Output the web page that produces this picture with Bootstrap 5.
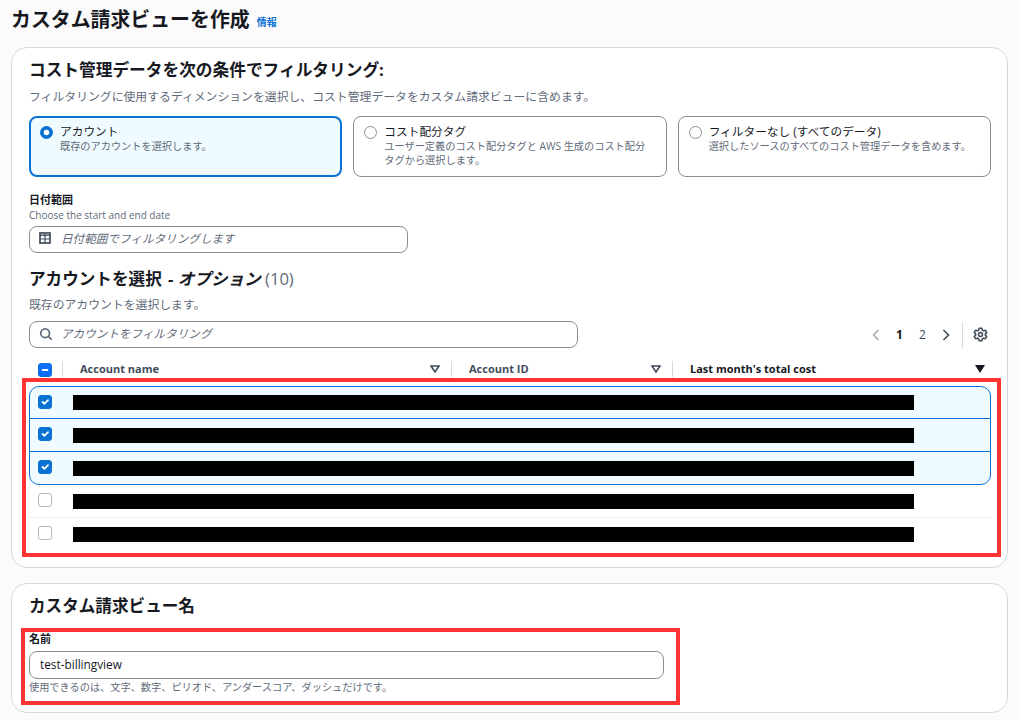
<!doctype html>
<html lang="ja">
<head>
<meta charset="utf-8">
<title>カスタム請求ビューを作成</title>
<link href="https://cdn.jsdelivr.net/npm/bootstrap@5.3.0/dist/css/bootstrap.min.css" rel="stylesheet">
<style>
html,body{height:720px;overflow:hidden}
body{background:#fbfbfb;color:#16191f;font-family:"Open Sans","Noto Sans CJK JP",sans-serif;font-size:12px}
.page-wrap{padding:0 12px 0 11px}
.title-bar{height:47px;padding:0 0 7px;gap:7px}
.page-title{font-size:19.9px;line-height:40px;font-weight:700;margin:0;color:#16191f}
.info-link{font-size:10px;font-weight:700;color:#0972d3;text-decoration:none;margin-top:4px}
.panel{border:1px solid #d5d8dd;border-radius:16px;background:#fff;padding:11px 16px 17px 17px}
.panel-next{margin-top:15px;padding-top:11px;padding-bottom:18px}
.panel-title{font-size:16.7px;line-height:22px;font-weight:700;margin:0}
.section-title{font-size:16.6px;line-height:22px;font-weight:700;margin:15px 0 0}
.section-title em{margin-left:2px}
.count{font-weight:400;color:#5f6b7a}
.muted-line{font-size:11.85px;line-height:16px;color:#5f6b7a}
.line-a{margin-top:7px}
.line-b{margin-top:6px}
.tiles{display:grid;grid-template-columns:repeat(3,1fr);gap:11px;margin-top:12px}
.tile{height:61px;border:1px solid #8c8c94;border-radius:8px;padding:7px 10px 0 10px;gap:7px;background:#fff}
.tile-on{border:2px solid #0972d3;background:#f0fbff;padding:6px 9px 0 9px}
.tile-mid{padding-right:20px}
.tile-name{font-size:11.7px;line-height:15px}
.tile-desc{font-size:10.2px;line-height:14px;color:#5f6b7a}
.form-check-input{margin:0;flex:none;width:13px;height:13px;border:1px solid #8c8c94}
.form-check-input[type=radio]{margin-top:2px}
.form-check-input:checked,.form-check-input:indeterminate{background-color:#0972d3;border-color:#0972d3}
.form-check-input[type=checkbox]{width:14px;height:14px;border-radius:3px;border-color:#b4b8bd}
.form-check-input[type=checkbox]:checked,.form-check-input[type=checkbox]:indeterminate{border-color:#0972d3}
.field-label{font-size:11px;line-height:14px;font-weight:700}
.field-hint{font-size:10px;line-height:14px;color:#5f6b7a;margin-top:1px}
.date-label{margin-top:16px}
.date-field{width:379px;margin-top:4px}
.text-box{height:27px;min-height:0;border:1px solid #8c8c94;border-radius:8px;font-size:11.6px;padding:0 11px 2px;background:#fff;color:#16191f;box-shadow:none}
.text-box::placeholder{color:#5f6b7a;font-style:italic}
.has-icon{padding-left:31px}
.box-icon{position:absolute;left:10px;top:6px;width:14px;height:14px;color:#5f6b7a}
.tools{margin-top:9px}
.search-field{width:549px}
.pager{color:#414d5c;font-size:12px;margin-left:auto;height:26px;padding-right:2px}
.pager svg{width:12px;height:12px}
.pg-num{width:23px;text-align:center}
.pg-on{font-weight:700;color:#16191f}
.pg-prev{color:#a6abb1;margin-right:6px}
.pg-next{margin-left:6px;color:#414d5c}
.pg-sep{width:1px;height:26px;background:#d5d8dd;margin:0 10px}
.pg-gear{width:15px!important;height:15px!important;margin-right:1px}
.head-grid{display:grid;grid-template-columns:33px 389px 221px 1fr;height:16px;margin-top:13px;align-items:center}
.head-check{padding-left:9px;height:14px;margin-top:1px}
.head-cell{border-left:1px solid #d5d8dd;height:16px;padding:0 11px 0 17px;font-size:11px;line-height:16px;font-weight:700;color:#414d5c}
.head-cell svg{width:10px;height:8px;color:#414d5c}
.head-last{color:#16191f;padding-right:6px}
.head-last svg{color:#16191f}
.rows-wrap{margin-top:9px}
.rows-wrap .form-check-input{margin-bottom:2px}
.acct-row{height:32px;padding-left:9px;gap:21px}
.acct-on{height:33px;background:#f0fbff;border:1.5px solid #0972d3;border-left-width:1px;border-right-width:1px;padding-left:8px}
.acct-on+.acct-on{margin-top:-1px;height:34px}
.acct-top{border-radius:10px 10px 0 0}
.acct-end{border-radius:0 0 10px 10px}
.acct-line{height:33px;border-top:1px solid #eceef0}
.redact{width:841px;height:15px;background:#000}
.mark-box{position:absolute;border:4.5px solid #ff3333;pointer-events:none}
.mark-rows{left:-7.5px;right:-10px;top:-8px;bottom:-7px}
.name-wrap{width:635px;margin-top:15px}
.mark-name{left:-8px;right:-16px;top:-4px;bottom:-11px}
.name-box{height:28px;margin-top:5px;padding:0 10px 3px;font-size:11.8px}
.name-hint{margin-top:1px;font-size:10.2px}
</style>
</head>
<body>
<main class="page-wrap">
  <div class="title-bar d-flex align-items-center">
    <h1 class="page-title">カスタム請求ビューを作成</h1>
    <a class="info-link" href="#">情報</a>
  </div>

  <section class="panel">
    <h2 class="panel-title">コスト管理データを次の条件でフィルタリング:</h2>
    <div class="muted-line line-a">フィルタリングに使用するディメンションを選択し、コスト管理データをカスタム請求ビューに含めます。</div>

    <div class="tiles">
      <label class="tile tile-on d-flex align-items-start">
        <input class="form-check-input" type="radio" name="dim" checked>
        <span><span class="tile-name d-block">アカウント</span><span class="tile-desc d-block">既存のアカウントを選択します。</span></span>
      </label>
      <label class="tile tile-mid d-flex align-items-start">
        <input class="form-check-input" type="radio" name="dim">
        <span><span class="tile-name d-block">コスト配分タグ</span><span class="tile-desc d-block">ユーザー定義のコスト配分タグと AWS 生成のコスト配分タグから選択します。</span></span>
      </label>
      <label class="tile d-flex align-items-start">
        <input class="form-check-input" type="radio" name="dim">
        <span><span class="tile-name d-block">フィルターなし (すべてのデータ)</span><span class="tile-desc d-block">選択したソースのすべてのコスト管理データを含めます。</span></span>
      </label>
    </div>

    <div class="field-label date-label">日付範囲</div>
    <div class="field-hint">Choose the start and end date</div>
    <div class="date-field position-relative">
      <svg class="box-icon" viewBox="0 0 14 14" fill="none" stroke="#414d5c" stroke-width="1.7"><rect x="1" y="1" width="10" height="10"/><path d="M1 3.2h10" stroke-width="1.4"/><path d="M6 2v9M1 7h10" stroke-width="1.2"/></svg>
      <input class="form-control text-box has-icon" type="text" placeholder="日付範囲でフィルタリングします">
    </div>

    <h3 class="section-title">アカウントを選択 <em>- オプション</em> <span class="count">(10)</span></h3>
    <div class="muted-line line-b">既存のアカウントを選択します。</div>

    <div class="tools d-flex align-items-center">
      <div class="search-field position-relative">
        <svg class="box-icon" viewBox="0 0 16 16" fill="none" stroke="currentColor" stroke-width="2"><circle cx="7" cy="7" r="5"/><path d="m10.7 10.7 3.8 3.8"/></svg>
        <input class="form-control text-box has-icon" type="text" placeholder="アカウントをフィルタリング">
      </div>
      <nav class="pager d-flex align-items-center">
        <svg class="pg-prev" viewBox="0 0 12 12" fill="none" stroke="currentColor" stroke-width="1.6"><path d="M8.5 1 3.5 6l5 5"/></svg>
        <span class="pg-num pg-on">1</span>
        <span class="pg-num">2</span>
        <svg class="pg-next" viewBox="0 0 12 12" fill="none" stroke="currentColor" stroke-width="1.6"><path d="m3.5 1 5 5-5 5"/></svg>
        <span class="pg-sep"></span>
        <svg class="pg-gear" viewBox="0 0 16 16" fill="none" stroke="currentColor" stroke-width="1.7" stroke-linejoin="round"><path d="M6.6 1.3h2.8l.5 2 1.4.8 2-.6 1.4 2.4-1.5 1.4v1.4l1.5 1.4-1.4 2.4-2-.6-1.4.8-.5 2H6.6l-.5-2-1.4-.8-2 .6-1.4-2.4 1.5-1.4V7.3L1.3 5.9l1.4-2.4 2 .6 1.4-.8z"/><circle cx="8" cy="8" r="2.1"/></svg>
      </nav>
    </div>

    <div class="head-grid">
      <div class="head-check d-flex"><input id="allRows" class="form-check-input" type="checkbox" checked></div>
      <div class="head-cell d-flex justify-content-between align-items-center"><span>Account name</span><svg viewBox="0 0 10 8" fill="none" stroke="currentColor" stroke-width="1.6"><path d="M1 1h8L5 7z"/></svg></div>
      <div class="head-cell d-flex justify-content-between align-items-center"><span>Account ID</span><svg viewBox="0 0 10 8" fill="none" stroke="currentColor" stroke-width="1.6"><path d="M1 1h8L5 7z"/></svg></div>
      <div class="head-cell head-last d-flex justify-content-between align-items-center"><span>Last month's total cost</span><svg viewBox="0 0 10 8" fill="currentColor"><path d="M0 0h10L5 8z"/></svg></div>
    </div>

    <div class="rows-wrap position-relative">
      <div class="acct-row acct-on acct-top d-flex align-items-center"><input class="form-check-input" type="checkbox" checked><div class="redact"></div></div>
      <div class="acct-row acct-on d-flex align-items-center"><input class="form-check-input" type="checkbox" checked><div class="redact"></div></div>
      <div class="acct-row acct-on acct-end d-flex align-items-center"><input class="form-check-input" type="checkbox" checked><div class="redact"></div></div>
      <div class="acct-row d-flex align-items-center"><input class="form-check-input" type="checkbox"><div class="redact"></div></div>
      <div class="acct-row acct-line d-flex align-items-center"><input class="form-check-input" type="checkbox"><div class="redact"></div></div>
      <div class="mark-box mark-rows"></div>
    </div>
  </section>

  <section class="panel panel-next">
    <h2 class="section-title mt-0">カスタム請求ビュー名</h2>
    <div class="name-wrap position-relative">
      <div class="field-label">名前</div>
      <input class="form-control text-box name-box" type="text" value="test-billingview">
      <div class="field-hint name-hint">使用できるのは、文字、数字、ピリオド、アンダースコア、ダッシュだけです。</div>
      <div class="mark-box mark-name"></div>
    </div>
  </section>
</main>
<script src="https://cdn.jsdelivr.net/npm/bootstrap@5.3.0/dist/js/bootstrap.bundle.min.js"></script>
<script>document.getElementById('allRows').indeterminate=true;</script>
</body>
</html>
